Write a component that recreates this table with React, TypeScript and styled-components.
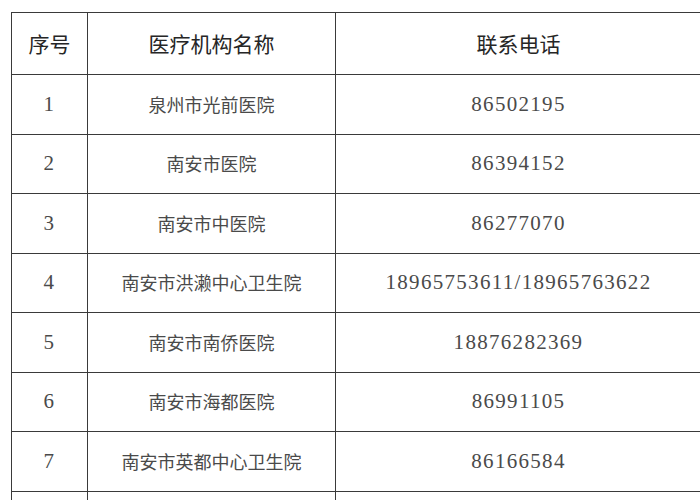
import React from "react";
import styled, { createGlobalStyle } from "styled-components";

const GlobalStyle = createGlobalStyle`
  html, body {
    margin: 0;
    padding: 0;
    background: #ffffff;
    overflow: hidden;
  }
  body {
    width: 700px;
    height: 500px;
  }
`;

const Page = styled.div`
  width: 700px;
  height: 500px;
  overflow: hidden;
  padding: 12px 0 0 11px;
  box-sizing: border-box;
`;

const Grid = styled.div`
  display: grid;
  grid-template-columns: 76px 248px 366px;
  grid-template-rows: 62px repeat(8, 59.5px);
  border-top: 1px solid #3a3a3a;
  border-left: 1px solid #3a3a3a;
  width: max-content;
`;

const Cell = styled.div<{ $head?: boolean; $kind?: "num" | "cjk" }>`
  box-sizing: border-box;
  border-right: 1px solid #3a3a3a;
  border-bottom: 1px solid #3a3a3a;
  display: flex;
  align-items: center;
  justify-content: center;
  white-space: nowrap;
  font-family: ${(p) =>
    p.$kind === "num"
      ? `"Liberation Serif", "Noto Sans CJK SC", serif`
      : `"Noto Sans CJK SC", sans-serif`};
  font-size: ${(p) => (p.$head ? "21px" : p.$kind === "num" ? "21px" : "18px")};
  letter-spacing: ${(p) => (p.$kind === "num" ? "1.3px" : "0")};
  color: ${(p) => (p.$head ? "#262626" : "#4a4a4a")};
  padding-bottom: ${(p) => (p.$head ? "2px" : p.$kind === "cjk" ? "1px" : "0")};
`;

const rows: [string, string, string][] = [
  ["1", "泉州市光前医院", "86502195"],
  ["2", "南安市医院", "86394152"],
  ["3", "南安市中医院", "86277070"],
  ["4", "南安市洪濑中心卫生院", "18965753611/18965763622"],
  ["5", "南安市南侨医院", "18876282369"],
  ["6", "南安市海都医院", "86991105"],
  ["7", "南安市英都中心卫生院", "86166584"],
];

export default function App() {
  return (
    <>
      <GlobalStyle />
      <Page>
        <Grid>
          <Cell $head>序号</Cell>
          <Cell $head>医疗机构名称</Cell>
          <Cell $head>联系电话</Cell>
          {rows.map(([n, name, tel]) => (
            <React.Fragment key={n}>
              <Cell $kind="num">{n}</Cell>
              <Cell $kind="cjk">{name}</Cell>
              <Cell $kind="num">{tel}</Cell>
            </React.Fragment>
          ))}
          <Cell />
          <Cell />
          <Cell />
        </Grid>
      </Page>
    </>
  );
}
